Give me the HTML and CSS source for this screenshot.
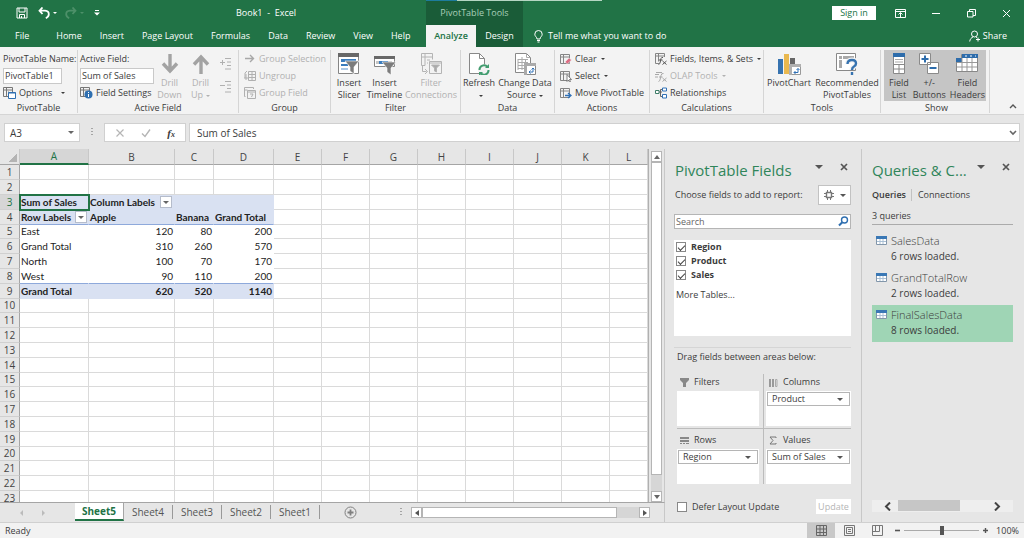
FILE: index.html
```html
<!DOCTYPE html>
<html lang="en">
<head>
<meta charset="utf-8">
<title>Book1 - Excel</title>
<link rel="stylesheet" href="styles.css">
</head>
<body>
<header class="top">
  <div class="title-left">
    <div class="quick">
      <button aria-label="Save"><svg width="12" height="12" viewBox="0 0 12 12" fill="none" stroke="#fff"><path d="M1 1h10v10H1zM3 1v4h6V1M3.500 11V7.500h5V11M5.500 9v2"/></svg></button>
      <button class="undo" aria-label="Undo"><svg width="12" height="12" viewBox="0 0 12 12" fill="none" stroke="#fff" stroke-width="1.800"><path d="M4.500 .5L1.500 3.700L4.500 7M1.500 3.700H7q3.800 .3 3.800 3.500q0 2.500-3 4"/></svg><i class="caret"></i></button>
      <button class="redo" aria-label="Redo"><svg width="12" height="12" viewBox="0 0 12 12" fill="none" stroke="#4d9069" stroke-width="1.800"><path d="M7.500 .5L10.500 3.700L7.500 7M10.500 3.700H5q-3.800 .3-3.800 3.500q0 2.500 3 4"/></svg><i class="caret"></i></button>
      <button class="custom" aria-label="Customize toolbar"><svg width="6" height="6" viewBox="0 0 6 6" fill="#fff"><path d="M1 0h4v1H1zM0 2.500h6L3 5.500z"/></svg></button>
    </div>
    <span class="book">Book1&nbsp; -&nbsp; Excel</span>
  </div>
  <div class="context-title">PivotTable Tools</div>
  <div class="title-right">
    <button class="signin">Sign in</button>
    <button aria-label="Ribbon display options"><svg width="11" height="9" viewBox="0 0 11 9" fill="none" stroke="#fff"><path d="M.5.5h10v8H.5zM.5 2.500h10M5.500 8V4M3.500 5.500l2-2l2 2"/></svg></button>
    <button aria-label="Minimize"><svg width="9" height="9" viewBox="0 0 9 9" stroke="#fff"><path d="M0 4.500h8"/></svg></button>
    <button aria-label="Restore"><svg width="9" height="9" viewBox="0 0 9 9" fill="none" stroke="#fff"><path d="M.5 2.500h5.500v5.500H.5zM2.500 2.500v-2h6v6H6"/></svg></button>
    <button aria-label="Close"><svg width="9" height="9" viewBox="0 0 9 9" stroke="#fff"><path d="M1 1l7 7M8 1L1 8"/></svg></button>
  </div>
  <nav class="tabs">
    <a class="file" href="#">File</a><a href="#">Home</a><a href="#">Insert</a><a href="#">Page Layout</a><a href="#">Formulas</a><a href="#">Data</a><a href="#">Review</a><a href="#">View</a><a href="#">Help</a>
  </nav>
  <nav class="context-tabs"><a class="active" href="#">Analyze</a><a href="#">Design</a></nav>
  <div class="tabs-right">
    <button class="tell"><svg width="9" height="13" viewBox="0 0 9 13" fill="none" stroke="#fff"><path d="M3 9C3 7 .8 6.500 .8 4.200a3.700 3.700 0 0 1 7.400 0C8.200 6.500 6 7 6 9zM3 10.500h3M3.500 12h2"/></svg>Tell me what you want to do</button>
    <button class="share"><svg width="12" height="12" viewBox="0 0 12 12" fill="none" stroke="#fff"><circle cx="5.500" cy="4" r="3"/><path d="M.7 11.500C1 9 2.500 7.500 4 7M7 7l1 .7M9 7.500v4M7 9.500h4"/></svg>Share</button>
  </div>
</header>

<section class="ribbon">
  <div class="group g-pivot">
    <div class="body stack">
      <label for="ptname">PivotTable Name:</label>
      <input id="ptname" class="field name" value="PivotTable1">
      <button class="small"><svg width="13" height="12" viewBox="0 0 13 12" fill="none" stroke="#777"><path d="M.5.5h9v9h-9zM.5 3h9M3.500.5v9M5 5h1M5 7h1"/><path d="M5.500 5.500h7v6h-7z" fill="#fff" stroke="#2f6fb0"/><path d="M5.500 6h7" stroke="#2f6fb0"/></svg>Options<i class="caret wide"></i></button>
    </div>
    <h2>PivotTable</h2>
  </div>
  <div class="group g-active">
    <div class="body">
      <div class="stack">
        <label for="afname">Active Field:</label>
        <input id="afname" class="field" value="Sum of Sales">
        <button class="small"><svg width="13" height="12" viewBox="0 0 13 12" fill="none" stroke="#777"><path d="M.5.5h9v9h-9zM.5 3h9M3.500.5v9M5 5h1M5 7h1"/><circle cx="8.500" cy="7.500" r="4" fill="#2f6fb0" stroke="none"/><path d="M8.500 5v1M8.500 7v3" stroke="#fff"/></svg>Field Settings</button>
      </div>
      <button class="big off drill"><svg width="18" height="22" viewBox="0 0 18 22" fill="none" stroke="#a3a3a3" stroke-width="3.400"><path d="M9 1v17M2 10.500l7 7.500l7-7.500"/></svg><span>Drill<br>Down</span></button>
      <button class="big off drill"><svg width="18" height="22" viewBox="0 0 18 22" fill="none" stroke="#a3a3a3" stroke-width="3.400"><path d="M9 21V4M2 11.500L9 4l7 7.500"/></svg><span>Drill<br>Up<i class="caret"></i></span></button>
      <div class="expand">
        <button aria-label="Expand field"><svg width="11" height="12" viewBox="0 0 11 12" stroke="#b0b0b0"><path d="M5 .5h6M7 4h4M7 7.500h4M5 11h6M0 4.500h5M2.500 2v5"/></svg></button>
        <button aria-label="Collapse field"><svg width="11" height="12" viewBox="0 0 11 12" stroke="#b0b0b0"><path d="M5 .5h6M7 4h4M7 7.500h4M5 11h6M0 4.500h5"/></svg></button>
      </div>
    </div>
    <h2>Active Field</h2>
  </div>
  <div class="group g-group">
    <div class="body stack">
      <button class="small off"><svg width="12" height="12" viewBox="0 0 12 12" fill="none" stroke="#a8a8a8" stroke-width="1.400"><path d="M1 5.500h8M6 2l3.500 3.500L6 9"/></svg>Group Selection</button>
      <button class="small off"><svg width="12" height="12" viewBox="0 0 12 12" fill="none" stroke="#b0b0b0"><path d="M4.500 1.500h7v9h-7zM4.500 4.500h7M4.500 7.500h7M8 1.500v9M3 1Q0 3 1 5H3M1 5v3M0 8h4M2 6v4"/></svg>Ungroup</button>
      <button class="small off"><svg width="12" height="12" viewBox="0 0 12 12" fill="none" stroke="#b0b0b0"><path d="M1.500 9.500h-1V.5h9V2M.5 3h3"/><path d="M3.500 3.500h8v8h-8zM3.500 5h8M6 7h3L7.500 10"/></svg>Group Field</button>
    </div>
    <h2>Group</h2>
  </div>
  <div class="group g-filter">
    <div class="body">
      <button class="big"><svg width="22" height="22" viewBox="0 0 22 22"><path d="M.5.5h20v20H.5z" fill="#fff" stroke="#858585"/><path d="M0 0h21v4H0z" fill="#686868"/><path d="M3 6h15v3H3zM3 11h7v2H3z" fill="#3a7cbd"/><path d="M3 15h7v2H3z" fill="#a9c7e5"/><path d="M7 8h14l-5 6v7l-4-3v-4z" fill="#7c7c7c" stroke="#fff" stroke-width=".6"/></svg><span>Insert<br>Slicer</span></button>
      <button class="big wide"><svg width="22" height="22" viewBox="0 0 22 22"><path d="M.5 3.500h20v10H.5z" fill="#fff" stroke="#858585"/><path d="M0 3h21v3H0z" fill="#686868"/><path d="M2 8h3v3H2zM14 8h4v3h-4z" fill="#c6c6c6"/><path d="M5 8h9v3H5z" fill="#3a7cbd"/><path d="M8 9h14l-5 6v7l-4-3v-4z" fill="#7c7c7c" stroke="#fff" stroke-width=".6"/></svg><span>Insert<br>Timeline</span></button>
      <button class="big off wider"><svg width="22" height="22" viewBox="0 0 22 22" fill="none" stroke="#b4b4b4"><path d="M1.500 12.500V.5h11v6M1.500 4h11M5 .5v12H1.500M7 7h3M7 10h1M2.500 12.500v6h4M5 16l2.500 2.500L5 21M9.500 8.500h12v12h-12zM9.500 10h12"/><path d="M11.500 12h8l-3 3v4l-2-1v-3z" fill="#aaa"/></svg><span>Filter<br>Connections</span></button>
    </div>
    <h2>Filter</h2>
  </div>
  <div class="group g-data">
    <div class="body">
      <button class="big"><svg width="22" height="22" viewBox="0 0 22 22" fill="none"><path d="M1.500.5h10l5 5v15h-15z" fill="#fff" stroke="#888"/><path d="M11.500.5v5h5" stroke="#888"/><circle cx="16" cy="17" r="6" fill="#f3f3f3"/><path d="M11.500 17a4.500 4.500 0 0 1 8-3M20.500 17a4.500 4.500 0 0 1-8 3" stroke="#439d70" stroke-width="2"/><path d="M21 11v4h-4zM11 23v-4h4z" fill="#439d70"/></svg><span>Refresh<br><i class="caret"></i></span></button>
      <button class="big source"><svg width="22" height="22" viewBox="0 0 22 22" fill="none" stroke="#888"><path d="M1.500.5h11l4 4v15h-15z" fill="#fff"/><path d="M12.500.5v4h4M4 6.500h10M4 9.500h10M4 12.500h10M4 15.500h6M4 6v11M8 4v13M11.500 6v8" stroke="#aaa"/><path d="M10.500 10.500h11v11h-11z" fill="#fff"/><path d="M10 10h12v3H10zM10 13h3v9h-3z" fill="#aaa" stroke="none"/><path d="M15 19h4v-4M16.500 17.500L15 19l1.500 1.500M17.500 16.500L19 15l1.500 1.500" stroke="#2f70b6"/></svg><span>Change Data<br>Source<i class="caret"></i></span></button>
    </div>
    <h2>Data</h2>
  </div>
  <div class="group g-actions">
    <div class="body stack">
      <button class="small"><svg width="12" height="12" viewBox="0 0 12 12" fill="none" stroke="#858585"><path d="M.5 1.500h9v9h-9zM.5 4h9M3.500 1.500v9"/><path d="M5 9l4-4l2.500 2L7.500 11z" fill="#dc6d83" stroke="#f3f3f3" stroke-width=".5"/></svg>Clear<i class="caret"></i></button>
      <button class="small"><svg width="12" height="12" viewBox="0 0 12 12" fill="none" stroke="#858585"><path d="M.5 1.500h9v9h-9zM.5 4h9M3.500 1.500v9"/><path d="M7 4.500v7l1.500-1.500l1 2l1-.5l-1-2H11.500z" fill="#fff" stroke="#666" stroke-width=".8"/></svg>Select<i class="caret"></i></button>
      <button class="small"><svg width="12" height="12" viewBox="0 0 12 12" fill="none" stroke="#858585"><path d="M.5 1.500h9v9h-9zM.5 4h9M3.500 1.500v9"/><path d="M5 8.500h5M8 6l3 2.500L8 11" stroke="#2f70b6" stroke-width="1.400"/></svg>Move PivotTable</button>
    </div>
    <h2>Actions</h2>
  </div>
  <div class="group g-calc">
    <div class="body stack">
      <button class="small"><svg width="12" height="12" viewBox="0 0 12 12" fill="none" stroke="#858585"><path d="M4 10.500H.5v-10h9V4M.5 3h9M3.500.5v8"/><path d="M3.500 11.500Q5 11.500 5.500 8L6 5.500Q6.500 4 8 4.500M4 7h3.500M7.500 8l4 3.500M11.500 8l-4 3.500" stroke="#555"/></svg>Fields, Items, &amp; Sets<i class="caret"></i></button>
      <button class="small off"><svg width="12" height="12" viewBox="0 0 12 12" fill="none" stroke="#a8a8a8"><path d="M1 2.500h6M0 4.500h4M0 7h3M3.500 11.500Q5 11.500 5.500 8L6 5.500Q6.500 3 8.500 3.500M4 7h3.500M7.500 8l4 3.500M11.500 8l-4 3.500"/></svg>OLAP Tools<i class="caret"></i></button>
      <button class="small"><svg width="12" height="12" viewBox="0 0 12 12" fill="#fff" stroke="#666"><path d="M4 5h3M5.500 2.500v7M5.500 2.500h2M5.500 9.500h2" fill="none"/><path d="M.5 3.500h3.500v3H.5z" stroke="#3f7d68"/><path d="M7.500 1h4v3h-4zM7.500 7.500h4v3.500h-4z" stroke="#2f70b6"/></svg>Relationships</button>
    </div>
    <h2>Calculations</h2>
  </div>
  <div class="group g-tools">
    <div class="body">
      <button class="big chart"><svg width="24" height="22" viewBox="0 0 24 22"><path d="M1 6h5v15H1z" fill="#3673b0"/><path d="M7 1h5v20H7z" fill="#e9b84f"/><path d="M13 5h5v6h-5z" fill="#666"/><path d="M12.500 11.500h11v10h-11z" fill="#fff" stroke="#999"/><path d="M12 11h12v3H12zM12 14h3v8h-3z" fill="#b0b0b0"/><path d="M17 19.500h4v-4M18.500 18L17 19.500l1.500 1.500M19.500 17l1.500-1.500l1.500 1.500" fill="none" stroke="#2f70b6"/></svg><span>PivotChart</span></button>
      <button class="big recommend"><svg width="22" height="22" viewBox="0 0 22 22" fill="none"><path d="M.5.5h19v17H.5z" fill="#fff" stroke="#888"/><path d="M3 3h3v3H3zM7 3h11v3H7zM3 7h3v8H3z" fill="#a9a9a9"/><path d="M11.500 11q0-4 4.500-4q4 0 4 3.500q0 2-2 3q-2 1-2 3.500M16 19v3" stroke="#f3f3f3" stroke-width="5"/><path d="M11.500 11q0-4 4.500-4q4 0 4 3.500q0 2-2 3q-2 1-2 3.500M16 19v3" stroke="#3673b0" stroke-width="2.400"/></svg><span>Recommended<br>PivotTables</span></button>
    </div>
    <h2>Tools</h2>
  </div>
  <div class="group g-show">
    <div class="body pressed">
      <button class="big" aria-pressed="true"><svg width="14" height="22" viewBox="0 0 14 22"><path d="M1.500.5h11v20h-11z" fill="#fff" stroke="#888"/><path d="M1 0h12v4H1z" fill="#2d6cab"/><path d="M3 6.500h8M3 9h8" stroke="#aaa"/><path d="M1 11.500h12M1 16h12M7 12v9" stroke="#888"/></svg><span>Field<br>List</span></button>
      <button class="big" aria-pressed="true"><svg width="22" height="22" viewBox="0 0 22 22" fill="#fff" stroke="#8a8a8a"><path d="M1.500.5h11v11h-11zM9.500 9.500h11v11h-11z"/><path d="M3.500 6h7M7 2.500v7M11.500 15h7" stroke="#2d6cab" stroke-width="2"/></svg><span>+/-<br>Buttons</span></button>
      <button class="big" aria-pressed="true"><svg width="22" height="22" viewBox="0 0 22 22"><path d="M.5 5.500h5v-4h16v17H.5z" fill="#fff" stroke="#888"/><path d="M6 1h16v4H6zM0 5h6v4H0z" fill="#2d6cab"/><path d="M9 3h2M14 3h2M19 3h1" stroke="#fff"/><path d="M1 9.500h20M1 14h20M6 5v13M11 5v13M16 5v13" stroke="#999"/></svg><span>Field<br>Headers</span></button>
    </div>
    <h2>Show</h2>
  </div>
  <button class="collapse" aria-label="Collapse ribbon"><svg width="8" height="6" viewBox="0 0 8 6" fill="none" stroke="#555" stroke-width="1.400"><path d="M1 5l3-3l3 3"/></svg></button>
</section>

<section class="formula">
  <button class="namebox">A3<i class="caret"></i></button>
  <span class="dots"></span>
  <div class="fx">
    <button aria-label="Cancel"><svg width="10" height="10" viewBox="0 0 10 10" stroke="#b5b5b5" stroke-width="1.200"><path d="M1.500 1.500l7 7M8.500 1.500l-7 7"/></svg></button>
    <button aria-label="Enter"><svg width="10" height="10" viewBox="0 0 10 10" fill="none" stroke="#b5b5b5" stroke-width="1.400"><path d="M1 5.500L4 8.500L9 1.500"/></svg></button>
    <button class="fn" aria-label="Insert function">f<small>x</small></button>
  </div>
  <div class="formula-input"><input aria-label="Formula" value="Sum of Sales"><svg width="8" height="6" viewBox="0 0 8 6" fill="none" stroke="#666" stroke-width="1.600"><path d="M1 1l3 3l3-3"/></svg></div>
</section>

<main class="main">
  <section class="workbook">
    <div class="sheet">
      <div class="grid-wrap">
        <table class="grid">
          <colgroup><col class="c-head"><col class="c-a"><col class="c-b"><col class="c-c"><col class="c-d"><col class="c-std"><col class="c-std"><col class="c-std"><col class="c-std"><col class="c-std"><col class="c-std"><col class="c-std"><col></colgroup>
          <thead><tr><th class="corner"></th><th class="sel">A</th><th>B</th><th>C</th><th>D</th><th>E</th><th>F</th><th>G</th><th>H</th><th>I</th><th>J</th><th>K</th><th>L</th></tr></thead>
          <tbody id="rows"></tbody>
        </table>
      </div>
      <div class="vscroll">
        <button aria-label="Scroll up"><svg width="6" height="4" viewBox="0 0 6 4" fill="#666"><path d="M0 4h6L3 0z"/></svg></button>
        <div class="track"><div class="thumb"></div></div>
        <button aria-label="Scroll down"><svg width="6" height="4" viewBox="0 0 6 4" fill="#666"><path d="M0 0h6L3 4z"/></svg></button>
      </div>
    </div>
    <div class="sheetbar">
      <div class="sheet-nav"><button aria-label="Previous sheets"><svg width="4" height="6" viewBox="0 0 4 6" fill="#bbb"><path d="M3 0v6L0 3z"/></svg></button><button aria-label="Next sheets"><svg width="4" height="6" viewBox="0 0 4 6" fill="#bbb"><path d="M1 0v6l3-3z"/></svg></button></div>
      <button class="tab on">Sheet5</button><button class="tab">Sheet4</button><button class="tab">Sheet3</button><button class="tab">Sheet2</button><button class="tab">Sheet1</button>
      <button class="add" aria-label="New sheet"><svg width="13" height="13" viewBox="0 0 13 13" fill="none" stroke="#808080"><circle cx="6.500" cy="6.500" r="5.500"/><path d="M3.500 6.500h6M6.500 3.500v6" stroke-width="1.800"/></svg></button>
      <span class="dots"></span>
      <div class="hscroll">
        <button aria-label="Scroll left"><svg width="4" height="6" viewBox="0 0 4 6" fill="#555"><path d="M4 0v6L0 3z"/></svg></button>
        <div class="track"><div class="thumb"></div></div>
        <button aria-label="Scroll right"><svg width="4" height="6" viewBox="0 0 4 6" fill="#555"><path d="M0 0v6l4-3z"/></svg></button>
      </div>
    </div>
  </section>

  <aside class="pane fields">
    <div class="pane-head"><h1>PivotTable Fields</h1><button aria-label="Pane options"><i class="caret big-caret"></i></button><button aria-label="Close pane"><svg width="8" height="8" viewBox="0 0 8 8" stroke="#555" stroke-width="1.700"><path d="M1 1l6 6M7 1L1 7"/></svg></button></div>
    <div class="choose"><span>Choose fields to add to report:</span><button class="gear" aria-label="Tools"><svg width="10" height="10" viewBox="0 0 10 10" fill="none" stroke="#777"><path d="M2.500 2.500h5v5h-5z" stroke-width="1.400"/><path d="M3.500 0v2M6.500 0v2M3.500 8v2M6.500 8v2M0 3.500h2M0 6.500h2M8 3.500h2M8 6.500h2"/></svg><i class="caret big-caret"></i></button></div>
    <div class="search"><input aria-label="Search" placeholder="Search"><svg width="11" height="11" viewBox="0 0 11 11" fill="none" stroke="#2f6fb0" stroke-width="1.400"><circle cx="6.500" cy="4" r="3"/><path d="M4.300 6.200L1 9.500" stroke-width="2"/></svg></div>
    <div class="field-list">
      <label><input type="checkbox" checked>Region</label>
      <label><input type="checkbox" checked>Product</label>
      <label><input type="checkbox" checked>Sales</label>
      <a href="#">More Tables...</a>
    </div>
    <p class="drag">Drag fields between areas below:</p>
    <div class="areas">
      <div class="area"><h3><svg width="9" height="9" viewBox="0 0 9 9" fill="#888"><path d="M0 0h9v2L6 5v4H3V5L0 2z"/></svg>Filters</h3><div class="drop"></div></div>
      <div class="area"><h3><svg width="9" height="9" viewBox="0 0 9 9" fill="#999"><path d="M0 1h2v8H0zM3 1h2v8H3z"/><path d="M6.500 1.500h1.500v7H6.500z" fill="none" stroke="#aaa"/></svg>Columns</h3><div class="drop"><button>Product<i class="caret big-caret"></i></button></div></div>
      <div class="area"><h3><svg width="9" height="9" viewBox="0 0 9 9" fill="#888"><path d="M0 1h9v2H0zM0 4h9v2H0zM0 7h2v1H0zM3 7h2v1H3zM6 7h3v1H6z"/></svg>Rows</h3><div class="drop"><button>Region<i class="caret big-caret"></i></button></div></div>
      <div class="area"><h3><svg width="9" height="9" viewBox="0 0 9 9" fill="none" stroke="#777"><path d="M7 2V1H1l3 3.500L1 8h6V7"/></svg>Values</h3><div class="drop"><button>Sum of Sales<i class="caret big-caret"></i></button></div></div>
    </div>
    <div class="defer"><label><input type="checkbox">Defer Layout Update</label><button class="update" disabled>Update</button></div>
  </aside>

  <aside class="pane queries">
    <div class="pane-head"><h1>Queries &amp; C...</h1><button aria-label="Pane options"><i class="caret big-caret"></i></button><button aria-label="Close pane"><svg width="8" height="8" viewBox="0 0 8 8" stroke="#555" stroke-width="1.700"><path d="M1 1l6 6M7 1L1 7"/></svg></button></div>
    <div class="qtabs"><a class="on" href="#">Queries</a><a href="#">Connections</a></div>
    <p class="count">3 queries</p>
    <ul class="qlist">
      <li><svg width="11" height="9" viewBox="0 0 11 9"><path d="M.5.5h10v8H.5z" fill="#fff" stroke="#8296aa"/><path d="M0 0h11v3H0z" fill="#3a78b5"/><path d="M1 5.500h9M4 3v5M7 3v5" stroke="#aac0d5"/></svg><div><b>SalesData</b><span>6 rows loaded.</span></div></li>
      <li><svg width="11" height="9" viewBox="0 0 11 9"><path d="M.5.5h10v8H.5z" fill="#fff" stroke="#8296aa"/><path d="M0 0h11v3H0z" fill="#3a78b5"/><path d="M1 5.500h9M4 3v5M7 3v5" stroke="#aac0d5"/></svg><div><b>GrandTotalRow</b><span>2 rows loaded.</span></div></li>
      <li class="on"><svg width="11" height="9" viewBox="0 0 11 9"><path d="M.5.5h10v8H.5z" fill="#fff" stroke="#8296aa"/><path d="M0 0h11v3H0z" fill="#3a78b5"/><path d="M1 5.500h9M4 3v5M7 3v5" stroke="#aac0d5"/></svg><div><b>FinalSalesData</b><span>8 rows loaded.</span></div></li>
    </ul>
    <div class="qscroll">
      <button aria-label="Scroll left"><svg width="7" height="9" viewBox="0 0 7 9" fill="none" stroke="#444" stroke-width="2"><path d="M6 .5L2 4.500l4 4"/></svg></button>
      <div class="track"><div class="thumb"></div></div>
      <button aria-label="Scroll right"><svg width="7" height="9" viewBox="0 0 7 9" fill="none" stroke="#444" stroke-width="2"><path d="M1 .5l4 4l-4 4"/></svg></button>
    </div>
  </aside>
</main>

<footer class="status">
  <span class="ready">Ready</span>
  <button class="view on" aria-label="Normal view"><svg width="11" height="11" viewBox="0 0 11 11" fill="none" stroke="#666"><path d="M.5.5h10v10H.5zM.5 4h10M.5 7.500h10M4 .5v10M7.500.5v10"/></svg></button>
  <button class="view" aria-label="Page layout view"><svg width="11" height="11" viewBox="0 0 11 11" fill="none" stroke="#777"><path d="M.5.5h10v10H.5zM2.500 2.500h6v6h-6zM4 4.500h3M4 6.500h3"/></svg></button>
  <button class="view" aria-label="Page break view"><svg width="11" height="11" viewBox="0 0 11 11" fill="none" stroke="#777"><path d="M.5.500h10v10H.5zM3.500.5v6M.5 6.500h7M7.500.5v6"/></svg></button>
  <button class="zoom" aria-label="Zoom out"><svg width="5" height="5" viewBox="0 0 5 5" stroke="#555" stroke-width="1.600"><path d="M0 2.500h5"/></svg></button>
  <input class="slider" type="range" aria-label="Zoom" min="0" max="100" value="50">
  <button class="zoom" aria-label="Zoom in"><svg width="5" height="5" viewBox="0 0 5 5" stroke="#555" stroke-width="1.400"><path d="M0 2.500h5M2.500 0v5"/></svg></button>
  <span class="percent">100%</span>
</footer>
<script src="grid.js"></script>
</body>
</html>
```
FILE: styles.css
```css
:root {
  --green: #217346;
  --text: #3c3c3c;
  --line: #c6c6c6;
  --panel: #e6e6e6;
}
* { box-sizing: border-box; }
body {
  margin: 0;
  height: 100vh;
  overflow: hidden;
  display: flex;
  flex-direction: column;
  background: var(--panel);
  color: var(--text);
  font: 9px/12px "Open Sans", "Noto Sans", sans-serif;
}
button, input { font: inherit; color: inherit; margin: 0; }
button { border: 0; padding: 0; background: none; display: flex; align-items: center; white-space: nowrap; }
a { color: inherit; text-decoration: none; white-space: nowrap; }
h1, h2, h3, p, ul { margin: 0; padding: 0; font-size: 9px; font-weight: 400; list-style: none; }
svg { flex: none; display: block; }
.caret {
  display: inline-block;
  flex: none;
  border: 2px solid transparent;
  border-top-color: currentColor;
  border-bottom: 0;
  margin-left: 3px;
  vertical-align: middle;
}
.caret.wide { margin-left: 8px; }
.big-caret { border-width: 4px 4px 0; margin: 0; color: #555; }

/* Title bar and tabs */
.top {
  flex: none;
  display: grid;
  grid-template-columns: 426px 97px 1fr;
  grid-template-rows: 25px 22px;
  background: var(--green);
  color: #fff;
}
.title-left { display: flex; align-items: center; }
.quick { display: flex; align-items: center; padding-left: 16px; width: 236px; }
.undo { margin-left: 10px; }
.redo { margin-left: 8px; color: #4d9069; }
.custom { margin-left: 10px; }
.context-title { background: #1a5c38; color: #a9cfb8; display: grid; place-items: center; border-top: 1px solid; border-image: linear-gradient(90deg, #1d7c9c 31px, #b5d6c3 31px) 1; }
.title-right { display: flex; align-items: center; justify-content: flex-end; gap: 26px; padding-right: 13px; border-image: linear-gradient(90deg, #b5d6c3 80px, transparent 80px) 1; border-top: 1px solid; }
.signin { background: #fff; color: var(--green); height: 14px; width: 44px; justify-content: center; margin-right: -7px; }
.tabs { display: flex; align-items: center; padding-left: 6px; }
.tabs a { padding: 0 9px; }
.tabs .file { padding-right: 18px; }
.context-tabs { display: grid; grid-template-columns: 50px 1fr; background: #1a5c38; }
.context-tabs a { display: grid; place-items: center; }
.context-tabs .active { background: #f3f3f3; color: var(--green); font-weight: 600; }
.tabs-right { display: flex; justify-content: space-between; padding: 0 17px 0 11px; }
.tell { gap: 5px; }
.share { gap: 2px; }

/* Ribbon */
.ribbon { flex: none; display: flex; background: #f3f3f3; padding: 3px 0 1px; border-bottom: 1px solid #d5d5d5; }
.group { flex: none; border-right: 1px solid #d5d5d5; display: flex; flex-direction: column; justify-content: space-between; height: 63px; }
.group h2 { text-align: center; line-height: 11px; }
.body { display: flex; height: 51px; }
.stack { display: flex; flex-direction: column; justify-content: space-between; align-items: flex-start; height: 51px; }
.stack label { line-height: 17px; white-space: nowrap; }
.small { height: 17px; gap: 3px; }
.small .caret { margin-left: 1px; }
.small .caret.wide { margin-left: 6px; }
.field { width: 74px; height: 16px; border: 1px solid #c9c9c9; background: #fff; padding: 0 1px; }
.field.name { width: 59px; }
.off { color: #b1b1b1; }
.big { flex-direction: column; justify-content: flex-start; padding-top: 3px; gap: 2px; text-align: center; }
.big span { line-height: 12px; }
.drill { width: 31px; }
.expand { display: flex; flex-direction: column; gap: 11px; padding: 8px 0 0 4px; }
.g-pivot { width: 78px; }
.g-pivot .body { padding-left: 3px; }
.g-active { width: 161px; }
.g-active .body { padding-left: 2px; }
.g-group { width: 92px; }
.g-group .body, .g-actions .body, .g-calc .body { padding-left: 5px; }
.g-filter { width: 130px; }
.g-filter .big { width: 34px; }
.g-filter .body { padding-left: 1px; }
.g-filter .wide { width: 37px; }
.g-filter .wider { width: 56px; }
.g-data { width: 94px; }
.g-data .big { width: 36px; }
.g-data .source { width: 56px; }
.g-actions { width: 95px; }
.g-calc { width: 114px; }
.g-tools { width: 117px; }
.g-tools .chart { width: 50px; }
.g-tools .recommend { width: 66px; }
.g-show { width: 109px; padding-left: 3px; }
.pressed { background: #c5c5c5; width: 102px; justify-content: space-between; padding: 0 1px 0 5px; }
.collapse { margin-left: auto; padding: 0 7px; align-self: flex-end; height: 14px; }

/* Formula bar */
.formula { flex: none; display: flex; align-items: center; padding: 8px 4px 7px; font-size: 10px; }
.namebox { width: 76px; height: 19px; padding: 0 5px; background: #fff; border: 1px solid #d0d0d0; justify-content: space-between; }
.formula .caret { border-width: 3px 3px 0; color: #666; }
.dots { width: 2px; height: 9px; background: repeating-linear-gradient(#a5a5a5 0 1px, transparent 1px 3px); }
.formula .dots { margin: 0 11px; }
.fx { width: 82px; height: 19px; background: #fff; border: 1px solid #d0d0d0; display: flex; align-items: center; justify-content: space-around; padding: 0 2px; }
.fn { font: italic 600 11px/12px "Liberation Serif", serif; }
.fn small { font-size: 8px; align-self: flex-end; line-height: 9px; }
.formula-input { flex: 1; height: 19px; margin-left: 3px; background: #fff; border: 1px solid #d0d0d0; display: flex; align-items: center; padding: 0 2px 0 7px; }
.formula-input input { flex: 1; border: 0; padding: 0; background: none; }

/* Worksheet */
.main { flex: 1; min-height: 0; display: flex; }
.workbook { flex: 1; min-width: 0; display: flex; flex-direction: column; }
.sheet { flex: 1; min-height: 0; display: flex; }
.grid-wrap { flex: 1; min-width: 0; overflow: hidden; border-right: 1px solid #b0b0b0; }
.grid { width: 100%; table-layout: fixed; border-collapse: separate; border-spacing: 0; background: #fff; color: #222; font: 10px/12px Lato, sans-serif; }
.c-head { width: 20px; }
.c-a { width: 69px; }
.c-b { width: 86px; }
.c-c { width: 39px; }
.c-d { width: 60px; }
.c-std { width: 48px; }
.grid th { font: 10px/12px "Open Sans", "Noto Sans", sans-serif; background: var(--panel); padding: 0; border-right: 1px solid #c8c8c8; color: #444; }
.grid thead th { height: 16px; border-bottom: 1px solid #a5a5a5; }
.grid thead .sel { background: #d6d6d6; color: var(--green); border-bottom: 2px solid var(--green); }
.grid thead .corner { background: linear-gradient(135deg, transparent 50%, #b4b4b4 50%) 8px 4px / 9px 9px no-repeat var(--panel); }
.grid tbody th { border-bottom: 1px solid #d0d0d0; border-right-color: #a5a5a5; }
.grid tbody tr { height: 15px; }
.grid tbody tr:nth-child(5n) { height: 14px; }
.grid tbody th, .grid tbody td { line-height: 13px; }
.grid td { padding: 0 1px; border-right: 1px solid #dadada; border-bottom: 1px solid #dadada; white-space: nowrap; }
.grid .num { text-align: right; }
.grid .pivot { border-color: #fff; }
.grid .shade { background: #d9e1f2; border-color: #d9e1f2; font-weight: 700; }
.grid .rule { border-bottom-color: #8ea9db; }
.grid .selected { outline: 2px solid var(--green); outline-offset: -1px; }
.grid tbody th.sel { background: #d6d6d6; color: var(--green); }
.cell { display: flex; align-items: center; justify-content: space-between; height: 13px; }
.cell button { width: 12px; height: 12px; background: #fff; border: 1px solid #b5bccb; justify-content: center; color: #666; }
.cell .caret { border-width: 3px 3px 0; margin: 0; }
.cell.near { justify-content: flex-start; gap: 5px; }
.vscroll { width: 16px; padding: 2px 2px 0 2px; display: flex; flex-direction: column; border-right: 1px solid #c8c8c8; }
.vscroll button, .hscroll button { flex: none; width: 11px; height: 11px; background: #fff; border: 1px solid #b5b5b5; justify-content: center; }
.track { flex: 1; display: flex; background: #d6d6d6; }
.thumb { background: #fff; border: 1px solid #b5b5b5; }
.vscroll .thumb { width: 11px; height: 95%; }
.sheetbar { flex: none; height: 20px; border-top: 1px solid #a5a5a5; border-right: 1px solid #c8c8c8; display: flex; align-items: center; color: #555; font-size: 10px; }
.sheet-nav { width: 75px; display: flex; gap: 17px; padding-left: 20px; }
.tab { width: 49px; height: 14px; margin-bottom: 2px; justify-content: center; border-right: 1px solid #999; }
.tab.on { height: 18px; margin: 0; align-self: flex-start; background: #fff; color: var(--green); font-weight: 700; border-bottom: 2px solid var(--green); border-right: 1px solid #a5a5a5; }
.add { margin: 0 43px 0 24px; }
.hscroll { margin-left: auto; margin-right: 14px; flex: 0 1 239px; display: flex; }
.hscroll .thumb { width: 90%; height: 11px; }

/* Task panes */
.pane { flex: none; display: flex; flex-direction: column; border-right: 1px solid #c8c8c8; font-size: 9px; }
.fields { width: 197px; padding: 11px 10px 0 9px; }
.queries { width: 162px; padding: 11px 11px 10px 10px; border: 0; }
.pane-head { display: flex; align-items: center; height: 19px; gap: 17px; padding: 0 3px 0 1px; }
.pane-head h1 { flex: 1; font-size: 15px; line-height: 18px; color: #30855a; white-space: nowrap; }
.pane-head button { height: 12px; align-self: flex-start; margin-top: 1px; }
.queries .pane-head { padding: 0 3px 0 0; }
.queries h1 { min-width: 0; }
.choose { display: flex; justify-content: space-between; align-items: center; height: 20px; margin-top: 6px; padding-left: 1px; }
.gear { width: 33px; height: 20px; background: #fff; border: 1px solid #c2c2c2; justify-content: center; gap: 6px; }
.gear .big-caret, .drop .big-caret { border-width: 3px 3px 0; }
.search { display: flex; align-items: center; height: 15px; margin-top: 9px; background: #fff; border: 1px solid #b5b5b5; padding: 0 1px; }
.search input { flex: 1; min-width: 0; border: 0; padding: 0; background: none; }
.search input::placeholder { color: #666; opacity: 1; }
.field-list { background: #fff; height: 96px; margin-top: 11px; padding-left: 2px; display: flex; flex-direction: column; }
.field-list label { height: 14px; display: flex; align-items: center; gap: 5px; font-weight: 700; }
.field-list a { margin-top: 7px; }
input[type="checkbox"] { appearance: none; flex: none; width: 10px; height: 10px; border: 1px solid #888; background: #fff; display: grid; place-items: center; }
input[type="checkbox"]:checked::before { content: ""; width: 6px; height: 3px; border: solid #444; border-width: 0 0 1px 1px; transform: rotate(-45deg); }
.drag { margin-top: 11px; border-top: 1px solid #d5d5d5; padding: 3px 0 0 3px; }
.areas { display: grid; grid-template-columns: 1fr 1fr; margin: 11px 0 0 3px; }
.area { height: 55px; padding: 2px 0 4px 2px; border-bottom: 1px solid #bcbcbc; }
.area:nth-child(odd) { border-right: 1px solid #bcbcbc; padding: 2px 4px 4px 0; }
.area:nth-child(n+3) { border-bottom: 0; padding-top: 5px; padding-bottom: 0; }
.area h3 { display: flex; align-items: center; gap: 5px; padding-left: 3px; height: 12px; margin-bottom: 3px; }
.drop { background: #fff; height: 35px; padding: 1px; }
.drop button { width: 100%; height: 14px; border: 1px solid #b5b5b5; padding: 0 6px 0 4px; justify-content: space-between; }
.defer { display: flex; justify-content: space-between; align-items: center; margin: 15px 0 0 3px; }
.defer label { display: flex; align-items: center; gap: 5px; }
.update { width: 35px; height: 15px; background: #fff; color: #b5b5b5; justify-content: center; }
.qtabs { display: flex; margin-top: 9px; height: 14px; align-items: center; }
.qtabs .on { font-weight: 600; padding-right: 5px; margin-right: 6px; border-right: 1px solid #c2c2c2; }
.count { margin-top: 8px; border-bottom: 1px solid #ababab; height: 15px; }
.qlist { margin-top: 6px; }
.qlist li { display: flex; gap: 4px; padding: 3px 0 0 4px; height: 37px; }
.qlist svg { margin-top: 2px; }
.qlist li.on { background: #9fd5b5; }
.qlist b { display: block; font-size: 11px; line-height: 13px; font-weight: 300; }
.qlist span { display: block; font-size: 10px; line-height: 18px; }
.qscroll { margin-top: auto; display: flex; background: #eee; height: 12px; padding: 0 12px; gap: 7px; }
.qscroll .track { background: none; }
.qscroll .thumb { width: 70%; height: 11px; background: #c6c6c6; border: 0; }

/* Status bar */
.status { flex: none; height: 16px; border-top: 1px solid #d0d0d0; background: #f2f2f2; display: flex; align-items: center; padding: 0 5px; }
.ready { flex: 1; }
.view { width: 28px; height: 15px; justify-content: center; }
.view.on { background: #c8c8c8; }
.zoom { margin: 0 4px; }
.slider { appearance: none; width: 75px; height: 10px; background: linear-gradient(#aaa 0 0) center / 100% 1px no-repeat; }
.slider::-webkit-slider-thumb { appearance: none; width: 4px; height: 9px; background: #555; }
.percent { width: 27px; text-align: right; }
```
FILE: grid.js
```js
const COLUMNS = 12;
const ROWS = 23;
const data = {
  3: ["Sum of Sales", "Column Labels", "", ""],
  4: ["Row Labels", "Apple", "Banana", "Grand Total"],
  5: ["East", 120, 80, 200],
  6: ["Grand Total", 310, 260, 570],
  7: ["North", 100, 70, 170],
  8: ["West", 90, 110, 200],
  9: ["Grand Total", 620, 520, 1140]
};
const shaded = [3, 4, 9];
const ruled = [4, 8];
const body = document.getElementById("rows");

function withFilter(td, label, near) {
  const cell = document.createElement("div");
  cell.className = near ? "cell near" : "cell";
  cell.innerHTML = `<span>${label}</span><button aria-label="Filter"><i class="caret"></i></button>`;
  td.textContent = "";
  td.append(cell);
}

for (let r = 1; r <= ROWS; r++) {
  const tr = body.insertRow();
  const head = document.createElement("th");
  head.textContent = r;
  if (r === 3) head.className = "sel";
  tr.append(head);
  for (let c = 0; c < COLUMNS; c++) {
    const td = tr.insertCell();
    if (!data[r] || c > 3) continue;
    const value = data[r][c];
    td.textContent = value;
    td.classList.add("pivot");
    if (typeof value === "number") td.classList.add("num");
    if (shaded.includes(r)) td.classList.add("shade");
    if (ruled.includes(r)) td.classList.add("rule");
    if (r === 3 && c === 0) td.classList.add("selected");
    if (r === 3 && c === 1) withFilter(td, value, true);
    if (r === 4 && c === 0) withFilter(td, value, false);
  }
}
```
